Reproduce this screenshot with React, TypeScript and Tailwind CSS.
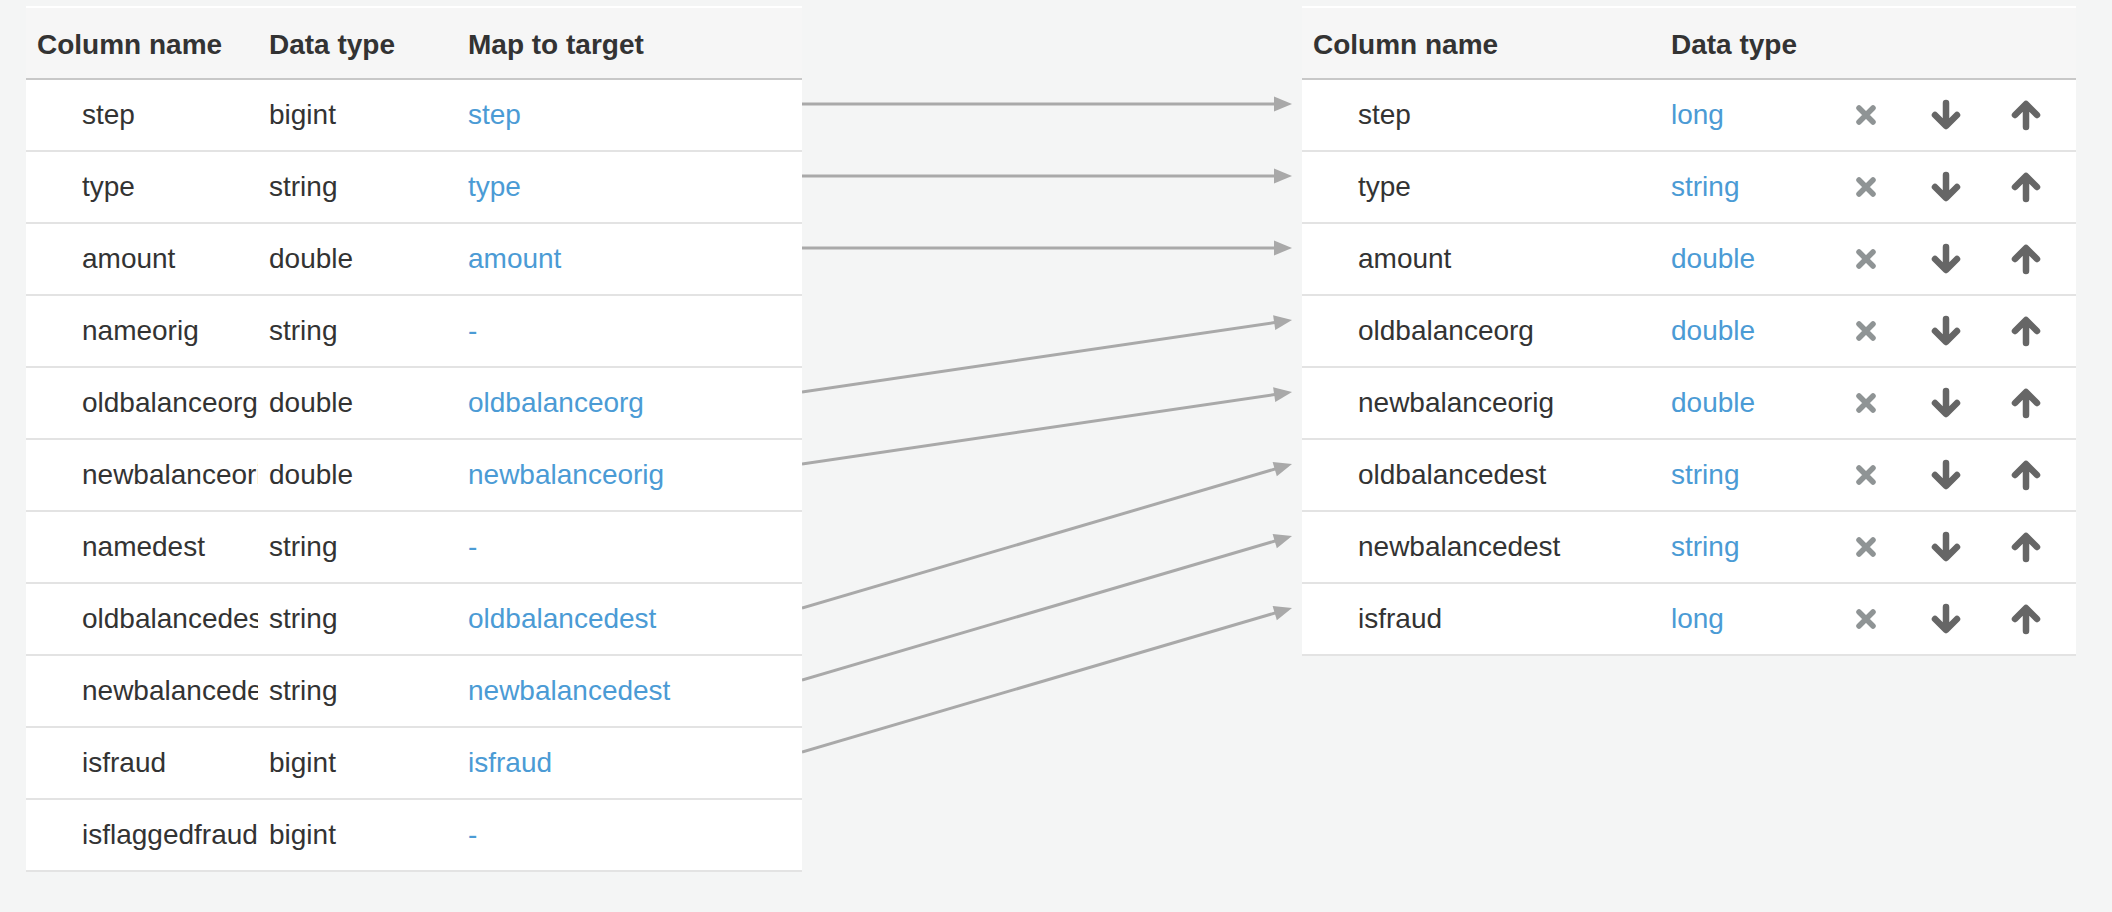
import React from "react";

interface SourceColumn {
  name: string;
  type: string;
  target: string | null;
}

interface TargetColumn {
  name: string;
  type: string;
}

const sourceColumns: SourceColumn[] = [
  { name: "step", type: "bigint", target: "step" },
  { name: "type", type: "string", target: "type" },
  { name: "amount", type: "double", target: "amount" },
  { name: "nameorig", type: "string", target: null },
  { name: "oldbalanceorg", type: "double", target: "oldbalanceorg" },
  { name: "newbalanceorig", type: "double", target: "newbalanceorig" },
  { name: "namedest", type: "string", target: null },
  { name: "oldbalancedest", type: "string", target: "oldbalancedest" },
  { name: "newbalancedest", type: "string", target: "newbalancedest" },
  { name: "isfraud", type: "bigint", target: "isfraud" },
  { name: "isflaggedfraud", type: "bigint", target: null },
];

const targetColumns: TargetColumn[] = [
  { name: "step", type: "long" },
  { name: "type", type: "string" },
  { name: "amount", type: "double" },
  { name: "oldbalanceorg", type: "double" },
  { name: "newbalanceorig", type: "double" },
  { name: "oldbalancedest", type: "string" },
  { name: "newbalancedest", type: "string" },
  { name: "isfraud", type: "long" },
];

const FONT = { fontFamily: '"Liberation Sans", Arial, Helvetica, sans-serif' };

export default function App() {
  return (
    <div className="min-h-[912px] bg-[#f4f5f5] pt-[6px] pl-[26px] text-[28px] text-[#333]" style={FONT}>
      <div className="flex items-start">
        <SourceTable />
        <Connections />
        <TargetTable />
      </div>
    </div>
  );
}

function SourceTable() {
  return (
    <div className="w-[776px] flex flex-col">
      <div className="grid grid-cols-[243px_199px_1fr] h-[74px] items-center pt-[4px] bg-[#f6f6f6] border-t-2 border-b-2 border-t-white border-b-[#c8c8c8] font-bold">
        <div className="pl-[11px] whitespace-nowrap">Column name</div>
        <div className="whitespace-nowrap">Data type</div>
        <div className="whitespace-nowrap">Map to target</div>
      </div>
      {sourceColumns.map((c) => (
        <div
          key={c.name}
          className="grid grid-cols-[243px_199px_1fr] h-[72px] items-center bg-white border-b-2 border-[#e3e3e3]"
        >
          <div className="pl-[56px]">
            <div className="w-[176px] overflow-hidden whitespace-nowrap">{c.name}</div>
          </div>
          <div className="whitespace-nowrap">{c.type}</div>
          <div className="text-[#4b9bd5] whitespace-nowrap">{c.target ?? "-"}</div>
        </div>
      ))}
    </div>
  );
}

function TargetTable() {
  return (
    <div className="w-[774px] flex flex-col">
      <div className="grid grid-cols-[369px_155px_80px_80px_80px_1fr] h-[74px] items-center pt-[4px] bg-[#f6f6f6] border-t-2 border-b-2 border-t-white border-b-[#c8c8c8] font-bold">
        <div className="pl-[11px] whitespace-nowrap">Column name</div>
        <div className="whitespace-nowrap">Data type</div>
        <div />
        <div />
        <div />
        <div />
      </div>
      {targetColumns.map((c) => (
        <div
          key={c.name}
          className="grid grid-cols-[369px_155px_80px_80px_80px_1fr] h-[72px] items-center bg-white border-b-2 border-[#e3e3e3]"
        >
          <div className="pl-[56px] pr-[11px] overflow-hidden whitespace-nowrap">{c.name}</div>
          <div className="text-[#4b9bd5] whitespace-nowrap">{c.type}</div>
          <div className="flex justify-center">
            <RemoveIcon />
          </div>
          <div className="flex justify-center">
            <DownIcon />
          </div>
          <div className="flex justify-center">
            <UpIcon />
          </div>
          <div />
        </div>
      ))}
    </div>
  );
}

function Connections() {
  // row top (inside svg) = 74 + 72 * i, arrow sits 24px below a row's top
  const rowY = (i: number) => 98 + 72 * i;
  const links: [number, number][] = [];
  let t = 0;
  sourceColumns.forEach((c, i) => {
    if (c.target) {
      links.push([i, t]);
      t++;
    }
  });

  return (
    <svg width="500" height="866" className="shrink-0 block">
      {links.map(([from, to]) => {
        const x1 = 0;
        const y1 = rowY(from);
        const x2 = 490;
        const y2 = rowY(to);
        const dx = x2 - x1;
        const dy = y2 - y1;
        const len = Math.hypot(dx, dy);
        const ux = dx / len;
        const uy = dy / len;
        const bx = x2 - 18 * ux;
        const by = y2 - 18 * uy;
        const nx = -uy * 7.5;
        const ny = ux * 7.5;
        return (
          <g key={from}>
            <line x1={x1} y1={y1} x2={bx + ux * 2} y2={by + uy * 2} stroke="#a9a9a9" strokeWidth="3" />
            <polygon
              points={`${x2},${y2} ${bx + nx},${by + ny} ${bx - nx},${by - ny}`}
              fill="#a9a9a9"
            />
          </g>
        );
      })}
    </svg>
  );
}

function RemoveIcon() {
  return (
    <svg width="20" height="20" viewBox="0 0 20 20">
      <path d="M3 3 L17 17 M17 3 L3 17" stroke="#8f9495" strokeWidth="5.5" strokeLinecap="round" fill="none" />
    </svg>
  );
}

function DownIcon() {
  return (
    <svg width="32" height="32" viewBox="0 0 32 32">
      <path
        d="M16 4 V26 M5 16 L16 27 L27 16"
        stroke="#666"
        strokeWidth="6.5"
        strokeLinecap="round"
        strokeLinejoin="round"
        fill="none"
      />
    </svg>
  );
}

function UpIcon() {
  return (
    <svg width="32" height="32" viewBox="0 0 32 32">
      <path
        d="M16 28 V6 M5 16 L16 5 L27 16"
        stroke="#666"
        strokeWidth="6.5"
        strokeLinecap="round"
        strokeLinejoin="round"
        fill="none"
      />
    </svg>
  );
}
